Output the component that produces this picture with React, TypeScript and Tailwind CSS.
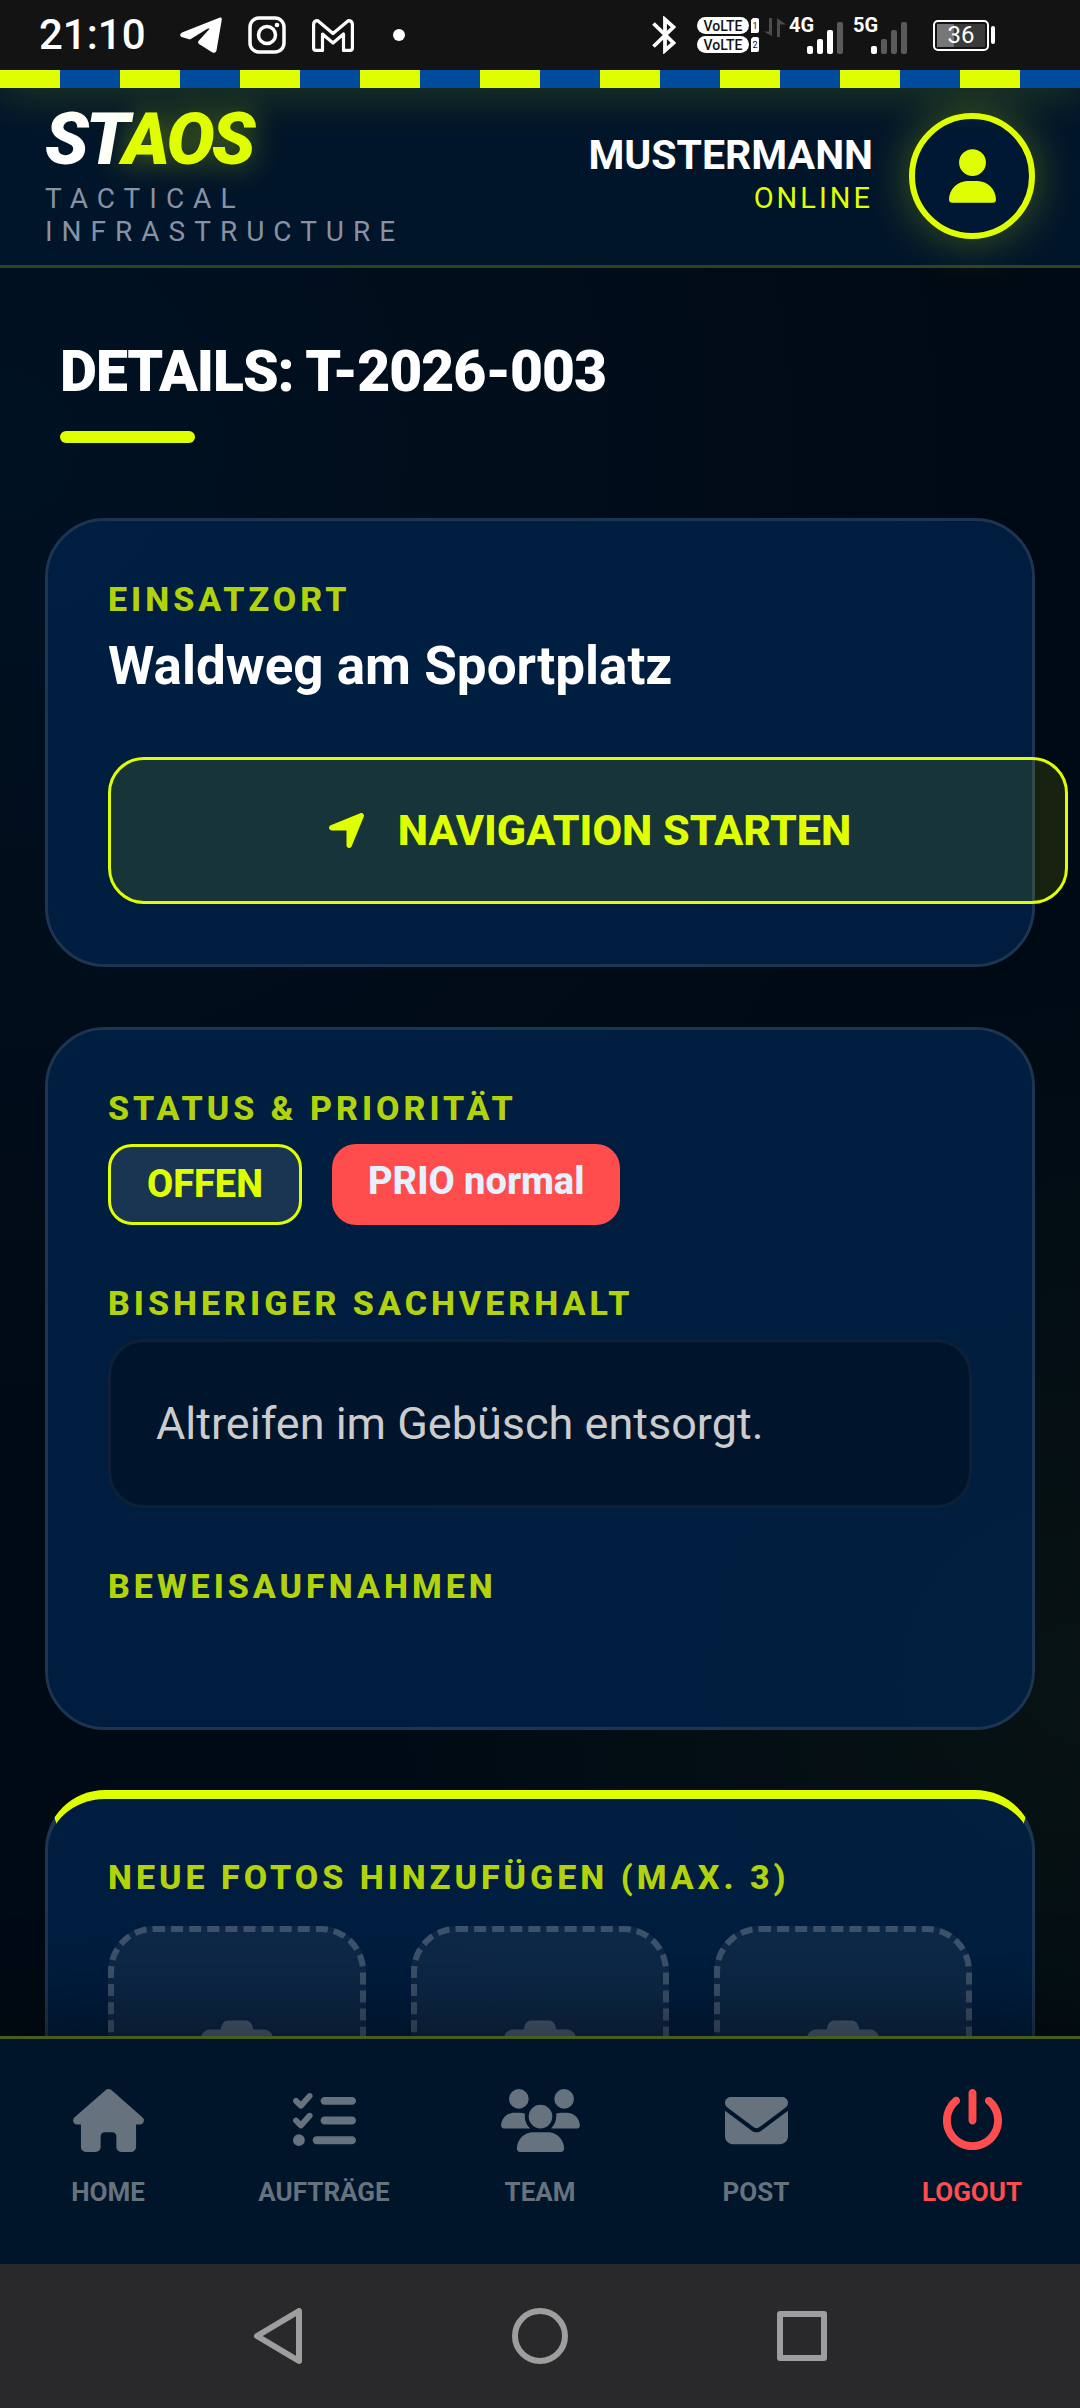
import type { ReactNode } from 'react';
import {
  FaCamera,
  FaEnvelope,
  FaHouse,
  FaListCheck,
  FaLocationArrow,
  FaPowerOff,
  FaUser,
  FaUsers,
} from 'react-icons/fa6';

const navItems = [
  { label: 'HOME', href: '#home', icon: <FaHouse className="h-[63px] w-[71px]" />, danger: false },
  { label: 'AUFTRÄGE', href: '#auftraege', icon: <FaListCheck className="h-[63px] w-[63px]" />, danger: false },
  { label: 'TEAM', href: '#team', icon: <FaUsers className="h-[63px] w-[79px]" />, danger: false },
  { label: 'POST', href: '#post', icon: <FaEnvelope className="h-[63px] w-[63px]" />, danger: false },
  { label: 'LOGOUT', href: '#logout', icon: <FaPowerOff className="h-[63px] w-[63px]" />, danger: true },
];

const photoSlots = [1, 2, 3];

function Volte({ sim }: { sim: number }) {
  return (
    <svg viewBox="0 0 62 17" className="h-[17px] w-[62px]">
      <rect width="52" height="17" rx="8.5" fill="#fff" />
      <path d="M54 3 L56 1 H60 Q62 1 62 3 V14 Q62 16 60 16 H54 Z" fill="#fff" />
      <text x="26" y="14" fontSize="14" fontWeight="500" textAnchor="middle" fill="#131313">
        VoLTE
      </text>
      <text x="58" y="12" fontSize="9" textAnchor="middle" fill="#131313">
        {sim}
      </text>
    </svg>
  );
}

function Signal({ label, bars }: { label: string; bars: number }) {
  return (
    <svg viewBox="0 -4 56 48" className="h-12 w-14">
      <text x="0" y="17" fontSize="20" fontWeight="700" fill="#fff">
        {label}
      </text>
      {[8, 15, 24, 32].map((h, i) => (
        <rect key={h} x={18 + i * 10} y={39 - h} width="6" height={h} rx="2" fill={i < bars ? '#fff' : '#5a5a5a'} />
      ))}
    </svg>
  );
}

function StatusBar() {
  return (
    <div className="relative z-30 flex h-[70px] shrink-0 items-center bg-[#131313] pr-[85px] pl-[39px] text-white">
      <span className="text-[42px] leading-none font-medium">21:10</span>
      <svg viewBox="0 0 42 36" className="ml-[34px] h-9 w-[42px]">
        <path
          d="M40 0.5 L2 15.5 Q-1.5 18 1.5 20 L10 22.5 L27 12 Q31 10 28.5 13 L18.5 24 Q17.5 25.5 19 27 L32 35.2 Q35.5 37 36.5 33.5 L41.8 2.5 Q42 0 40 .5 Z"
          fill="#fff"
        />
      </svg>
      <svg viewBox="0 0 38 38" className="ml-[26px] h-[38px] w-[38px]" fill="none" stroke="#fff" strokeWidth="3.5">
        <rect x="2" y="2" width="34" height="34" rx="9" />
        <circle cx="19" cy="19" r="8.5" />
        <circle cx="29" cy="9" r="2.3" fill="#fff" stroke="none" />
      </svg>
      <svg viewBox="0 0 42 33" className="ml-[26px] h-[33px] w-[42px]" fill="none" stroke="#fff" strokeWidth="3.2" strokeLinejoin="round">
        <path d="M1.6 5 V29 Q1.6 31.4 4 31.4 H10.5 V15 L21 24 L31.5 15 V31.4 H38 Q40.4 31.4 40.4 29 V5 Q40 1.6 36.5 1.6 L21 14.5 L5.5 1.6 Q2 1.6 1.6 5 Z" />
      </svg>
      <span className="ml-[39px] h-3 w-3 rounded-full bg-white" />

      <svg viewBox="0 0 24 38" className="ml-auto h-[38px] w-6" fill="none" stroke="#fff" strokeWidth="3.8">
        <path d="M1.5 7.5 L21.5 27 L13 34.5 V3.5 L21.5 11 L1.5 30.5" />
      </svg>
      <div className="ml-[21px] flex flex-col gap-[2px]">
        <Volte sim={1} />
        <Volte sim={2} />
      </div>
      <svg viewBox="0 0 22 38" className="ml-[5px] h-[38px] w-[22px]" fill="#4c4c4c">
        <path d="M5 2 H8 V20 L0 15.5 H5 Z M13 21 V2 L22 8.5 H16 V21 Z" />
      </svg>
      <div className="ml-[3px] flex gap-2">
        <Signal label="4G" bars={3} />
        <Signal label="5G" bars={1} />
      </div>
      <div className="ml-6 flex items-center gap-[2px]">
        <div className="h-[31px] w-14 rounded-[5px] border-2 border-white p-[2px]">
          <div className="flex h-full items-center justify-center bg-linear-to-r from-[#777] from-36% to-[#3a3a3a] to-36% text-[24px] leading-none">
            36
          </div>
        </div>
        <span className="h-[18px] w-1 rounded-sm bg-white" />
      </div>
    </div>
  );
}

function Header() {
  return (
    <header className="relative z-10 flex shrink-0 items-center justify-between border-b-[3px] border-[#2d4421] bg-[#001529] px-[45px] pt-4 pb-[17px]">
      <div className="w-[380px]">
        <div className="text-[72px] leading-none font-black tracking-[-3px] text-white italic">
          ST<span className="text-[#dfff00] [text-shadow:0_0_30px_rgba(223,255,0,0.4)]">AOS</span>
        </div>
        <div className="mt-[6px] text-[28px] leading-[33px] tracking-[9px] text-[#8892a4]">
          TACTICAL INFRASTRUCTURE
        </div>
      </div>
      <div className="flex items-center gap-9">
        <div className="flex flex-col pb-1 text-right">
          <div className="text-[41px] leading-[48px] font-bold text-white">MUSTERMANN</div>
          <div className="text-[29px] leading-[39px] tracking-[3px] text-[#dfff00]">ONLINE</div>
        </div>
        <button
          aria-label="Profil"
          className="flex h-[126px] w-[126px] items-center justify-center rounded-full border-[6px] border-[#dfff00] bg-[#001833] text-[#dfff00] shadow-[0_0_45px_rgba(223,255,0,0.3)]"
        >
          <FaUser className="h-[54px] w-[47px]" />
        </button>
      </div>
    </header>
  );
}

function Card({ children, accent = false }: { children: ReactNode; accent?: boolean }) {
  return (
    <section
      className={`rounded-[60px] border-[3px] border-[#1c3553] bg-[#002147]/85 bg-clip-padding p-[60px] ${
        accent ? 'border-t-[9px] border-t-[#dfff00]' : ''
      }`}
    >
      {children}
    </section>
  );
}

function Label({ children }: { children: ReactNode }) {
  return (
    <h2 className="mb-[17px] text-[34px] leading-[37px] font-extrabold tracking-[4px] text-[#b2d30c]">{children}</h2>
  );
}

function BottomNav() {
  return (
    <nav className="relative z-10 grid shrink-0 grid-cols-5 border-t-[3px] border-[#465d1d] bg-[#001529] pt-[50px] pb-14 shadow-[0_-15px_90px_rgba(0,0,0,0.5)]">
      {navItems.map((item) => (
        <a
          key={item.label}
          href={item.href}
          className={`flex flex-col items-center gap-6 text-[26px] leading-8 font-bold ${
            item.danger ? 'text-[#ff4d4d]' : 'text-[#66737f]'
          }`}
        >
          {item.icon}
          {item.label}
        </a>
      ))}
    </nav>
  );
}

function SystemNav() {
  return (
    <div className="relative z-20 flex h-36 shrink-0 items-center justify-center gap-[206px] bg-[#29292b] text-[#9e9e9f]">
      <button aria-label="Zurück">
        <svg viewBox="0 0 56 56" className="h-14 w-14" fill="none" stroke="currentColor" strokeWidth="6" strokeLinejoin="round">
          <path d="M49 3 V53 L7 28 Z" />
        </svg>
      </button>
      <button aria-label="Startbildschirm">
        <svg viewBox="0 0 56 56" className="h-14 w-14" fill="none" stroke="currentColor" strokeWidth="6">
          <circle cx="28" cy="28" r="25" />
        </svg>
      </button>
      <button aria-label="Übersicht">
        <svg viewBox="0 0 56 56" className="h-14 w-14" fill="none" stroke="currentColor" strokeWidth="6" strokeLinejoin="round">
          <rect x="6" y="6" width="44" height="44" />
        </svg>
      </button>
    </div>
  );
}

export default function App() {
  return (
    <div className="flex h-screen flex-col overflow-hidden bg-[#000a14] font-[Roboto,sans-serif]">
      <StatusBar />
      <div className="relative z-20 h-[18px] shrink-0 bg-[repeating-linear-gradient(90deg,#dfff00_0_60px,#004b9b_60px_120px)] shadow-[0_0_45px_rgba(223,255,0,0.3)]" />
      <Header />

      <main className="min-h-0 flex-1 overflow-y-auto bg-[radial-gradient(circle_at_0%_10%,rgba(0,51,102,0.18),transparent_50%),radial-gradient(circle_at_100%_80%,rgba(223,255,0,0.035),transparent_40%)] px-[45px] pt-[70px] [scrollbar-width:none]">
        <div className="px-[15px]">
          <h1 className="text-[57px] leading-[68px] font-black tracking-[-1px] text-white">DETAILS: T-2026-003</h1>
          <div className="mt-[25px] h-3 w-[135px] rounded-[6px] bg-[#dfff00]" />
        </div>

        <div className="mt-[75px] flex flex-col gap-[60px]">
          <Card>
            <Label>EINSATZORT</Label>
            <p className="text-[53px] leading-[62px] font-bold text-white">Waldweg am Sportplatz</p>
            <button className="mt-[60px] box-content flex h-[141px] w-full items-center justify-center gap-[30px] rounded-[36px] border-[3px] border-[#dfff00] bg-[#dfff00]/10 px-[45px] text-[43px] font-extrabold text-[#dfff00]">
              <FaLocationArrow className="h-[43px] w-[43px]" />
              NAVIGATION STARTEN
            </button>
          </Card>

          <Card>
            <Label>STATUS &amp; PRIORITÄT</Label>
            <div className="mb-[60px] flex gap-[30px] text-[38px] leading-[45px] font-extrabold">
              <span className="rounded-[24px] border-[3px] border-[#dfff00] bg-white/10 px-9 py-[15px] text-[#dfff00]">
                OFFEN
              </span>
              <span className="rounded-[24px] bg-[#ff4d4d] px-9 py-[15px] text-[#e6f1ff]">PRIO normal</span>
            </div>
            <Label>BISHERIGER SACHVERHALT</Label>
            <p className="mb-[60px] rounded-[36px] border-[3px] border-white/5 bg-black/30 p-[45px] text-[45px] leading-[73px] text-[#ccc]">
              Altreifen im Gebüsch entsorgt.
            </p>
            <Label>BEWEISAUFNAHMEN</Label>
            <div className="h-[45px]" />
          </Card>

          <Card accent>
            <Label>NEUE FOTOS HINZUFÜGEN (MAX. 3)</Label>
            <div className="mt-[30px] grid grid-cols-3 gap-[45px]">
              {photoSlots.map((slot) => (
                <button
                  key={slot}
                  aria-label={`Foto ${slot} hinzufügen`}
                  className="flex h-[252px] items-center justify-center rounded-[45px] border-[6px] border-dashed border-white/20 bg-white/5 text-white/25"
                >
                  <FaCamera className="h-[72px] w-[72px]" />
                </button>
              ))}
            </div>
          </Card>
        </div>
      </main>

      <BottomNav />
      <SystemNav />
    </div>
  );
}
